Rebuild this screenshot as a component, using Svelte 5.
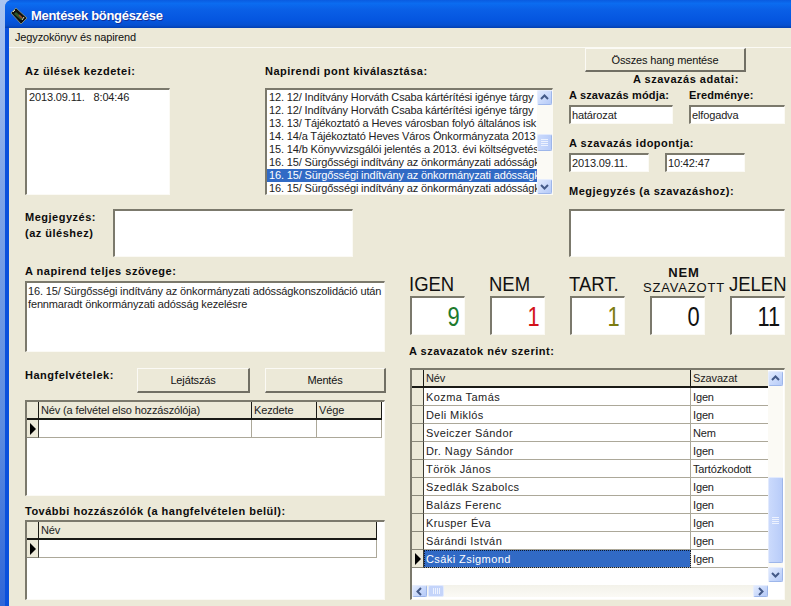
<script>
  const agenda = [
    "12. 12/ Indítvány Horváth Csaba kártérítési igénye tárgy",
    "12. 12/ Indítvány Horváth Csaba kártérítési igénye tárgy",
    "13. 13/ Tájékoztató a Heves városban folyó általános isk",
    "14. 14/a Tájékoztató Heves Város Önkormányzata 2013",
    "15. 14/b Könyvvizsgálói jelentés a 2013. évi költségvetés",
    "16. 15/ Sürgősségi indítvány az önkormányzati adósságk",
    "16. 15/ Sürgősségi indítvány az önkormányzati adósságk",
    "16. 15/ Sürgősségi indítvány az önkormányzati adósságk"
  ];

  const stats = [
    { label: "IGEN", value: 9, tone: "green" },
    { label: "NEM", value: 1, tone: "red" },
    { label: "TART.", value: 1, tone: "olive" },
    { label: "", value: 0, tone: "" },
    { label: "JELEN", value: 11, tone: "" }
  ];

  const votes = [
    ["Kozma Tamás", "Igen"],
    ["Deli Miklós", "Igen"],
    ["Sveiczer Sándor", "Nem"],
    ["Dr. Nagy Sándor", "Igen"],
    ["Török János", "Tartózkodott"],
    ["Szedlák Szabolcs", "Igen"],
    ["Balázs Ferenc", "Igen"],
    ["Krusper Éva", "Igen"],
    ["Sárándi István", "Igen"],
    ["Csáki Zsigmond", "Igen"]
  ];
</script>

{#snippet arrow(dir)}
  <div class="sb-btn">
    <svg width="9" height="9" viewBox="0 0 9 9">
      {#if dir === "up"}
        <path d="M1 6 L4.5 2.5 L8 6" />
      {:else if dir === "down"}
        <path d="M1 3 L4.5 6.5 L8 3" />
      {:else if dir === "left"}
        <path d="M6 1 L2.5 4.5 L6 8" />
      {:else}
        <path d="M3 1 L6.5 4.5 L3 8" />
      {/if}
    </svg>
  </div>
{/snippet}

{#snippet vscroll(offset, size)}
  <div class="sb-v">
    {@render arrow("up")}
    <div class="sb-track">
      <div class="sb-thumb" style="margin-top:{offset}px;height:{size}px"><i></i><i></i><i></i><i></i></div>
    </div>
    {@render arrow("down")}
  </div>
{/snippet}

{#snippet pointer()}
  <div class="row-head">
    <svg width="7" height="12" viewBox="0 0 7 12"><path d="M1 0 L7 6 L1 12 Z" /></svg>
  </div>
{/snippet}

<div class="screen">
  <div class="desk"></div>
  <div class="window">
    <header class="titlebar">
      <svg class="app-icon" width="18" height="18" viewBox="0 0 18 18">
        <path d="M6 1 L17 11 L11 17 L1 6 Z" fill="#11120e" stroke="#8fa08a" stroke-width="0.8" />
        <path d="M6 5 L13 11 L11 13 L4 7 Z" fill="#2f5a2c" />
        <path d="M9 8 L12 11" stroke="#a5482c" stroke-width="1.4" />
        <path d="M5 3 L3 5 M14 10 L12 13" stroke="#d8d3bd" stroke-width="1" />
      </svg>
      <span>Mentések böngészése</span>
    </header>
    <nav class="menubar">Jegyzokönyv és napirend</nav>

    <div class="content">
      <section class="top">
        <div class="top-left">
          <div class="list-row">
            <div class="col-sessions">
              <div class="label">Az ülések kezdetei:</div>
              <div class="sunken listbox sessions"><div class="item">2013.09.11.&nbsp;&nbsp;&nbsp;8:04:46</div></div>
            </div>
            <div class="col-agenda">
              <div class="label">Napirendi pont kiválasztása:</div>
              <div class="sunken listbox agenda">
                <div class="items">
                  {#each agenda as line, i}
                    <div class="item" class:selected={i === 6}>{line}</div>
                  {/each}
                </div>
                {@render vscroll(29, 17)}
              </div>
            </div>
          </div>
          <div class="note-row">
            <div class="label note-label">Megjegyzés:<br />(az üléshez)</div>
            <div class="sunken note"></div>
          </div>
        </div>

        <div class="top-right">
          <button class="btn save-all">Összes hang mentése</button>
          <div class="label vote-title">A szavazás adatai:</div>
          <div class="field-row">
            <div class="field-a">
              <div class="label tight">A szavazás módja:</div>
              <div class="sunken input">határozat</div>
            </div>
            <div class="field-b">
              <div class="label tight">Eredménye:</div>
              <div class="sunken input">elfogadva</div>
            </div>
          </div>
          <div class="label gap-label">A szavazás idopontja:</div>
          <div class="time-row">
            <div class="sunken input date">2013.09.11.</div>
            <div class="sunken input date">10:42:47</div>
          </div>
          <div class="label gap-label">Megjegyzés (a szavazáshoz):</div>
          <div class="sunken vote-note"></div>
        </div>
      </section>

      <section class="bottom">
        <div class="bottom-left">
          <div class="label">A napirend teljes szövege:</div>
          <div class="sunken full-text">16. 15/ Sürgősségi indítvány az önkormányzati adósságkonszolidáció után fennmaradt önkormányzati adósság kezelésre</div>

          <div class="rec-row">
            <div class="label rec-label">Hangfelvételek:</div>
            <button class="btn play">Lejátszás</button>
            <button class="btn save">Mentés</button>
          </div>

          <div class="sunken grid rec-grid">
            <div class="grid-row head">
              <div class="row-head"></div>
              <div class="cell c-name">Név (a felvétel elso hozzászólója)</div>
              <div class="cell c-time">Kezdete</div>
              <div class="cell c-time">Vége</div>
            </div>
            <div class="grid-row">
              {@render pointer()}
              <div class="cell c-name"></div>
              <div class="cell c-time"></div>
              <div class="cell c-time"></div>
            </div>
          </div>

          <div class="label others-label">További hozzászólók (a hangfelvételen belül):</div>
          <div class="sunken grid others-grid">
            <div class="grid-row head">
              <div class="row-head"></div>
              <div class="cell c-wide">Név</div>
            </div>
            <div class="grid-row">
              {@render pointer()}
              <div class="cell c-wide"></div>
            </div>
          </div>
        </div>

        <div class="bottom-right">
          <div class="stats">
            {#each stats as s}
              <div class="stat">
                {#if s.label}
                  <div class="stat-label">{s.label}</div>
                {:else}
                  <div class="stat-label small"><b>NEM</b><br />SZAVAZOTT</div>
                {/if}
                <div class="sunken stat-box {s.tone}"><span>{s.value}</span></div>
              </div>
            {/each}
          </div>

          <div class="label votes-label">A szavazatok név szerint:</div>
          <div class="sunken grid votes-grid">
            <div class="votes-main">
              <div class="grid-row head">
                <div class="row-head"></div>
                <div class="cell c-voter">Név</div>
                <div class="cell c-vote">Szavazat</div>
              </div>
              {#each votes as v, i}
                <div class="grid-row">
                  {#if i === votes.length - 1}
                    {@render pointer()}
                  {:else}
                    <div class="row-head"></div>
                  {/if}
                  <div class="cell c-voter voter" class:current={i === votes.length - 1}>{v[0]}</div>
                  <div class="cell c-vote">{v[1]}</div>
                </div>
              {/each}
              <div class="grid-fill"></div>
              <div class="sb-h">
                {@render arrow("left")}
                <div class="sb-thumb-h"><i></i><i></i><i></i><i></i></div>
                <div class="sb-h-track"></div>
                {@render arrow("right")}
              </div>
            </div>
            {@render vscroll(91, 86)}
          </div>
        </div>
      </section>
    </div>
  </div>
</div>

<style>
  :global(body) {
    margin: 0;
    background: #ece9d8;
  }

  .screen {
    display: flex;
    width: 791px;
    height: 606px;
    overflow: hidden;
    font-family: "Liberation Sans", Arial, sans-serif;
    font-size: 11px;
    letter-spacing: -0.14px;
    color: #111;
    background: #a9c4f0;
  }

  .screen * {
    box-sizing: border-box;
  }

  .desk {
    width: 5px;
    flex: none;
    background: linear-gradient(#a9c4f0 0, #7fa5e8 30%, #5d8de0 70%, #2f66d8 100%);
  }

  .window {
    flex: 1;
    min-width: 0;
    display: flex;
    flex-direction: column;
    background: #0a50dc;
    border-top-left-radius: 7px;
    overflow: hidden;
  }

  .titlebar {
    height: 28px;
    flex: none;
    display: flex;
    align-items: center;
    gap: 3px;
    padding: 3px 0 0 5px;
    color: #fff;
    font-size: 13px;
    font-weight: bold;
    letter-spacing: -0.3px;
    text-shadow: 1px 1px 0 #0f2f9a;
    background: linear-gradient(#0a5be0 0, #0b6cf0 12%, #0a5fe6 35%, #0556e0 70%, #0650d0 90%, #033fb0 100%);
  }

  .app-icon {
    flex: none;
  }

  .menubar {
    height: 20px;
    flex: none;
    margin-left: 4px;
    padding: 2px 0 0 6px;
    line-height: 14px;
    background: #ece9d8;
    border-bottom: 1px solid #fbfaf4;
  }

  .content {
    flex: 1;
    margin-left: 4px;
    background: #ece9d8;
    padding-left: 16px;
  }

  .label {
    font-weight: bold;
    line-height: 13px;
    letter-spacing: 0.5px;
    white-space: nowrap;
    color: #0c0c0c;
  }

  .tight {
    letter-spacing: 0.15px;
  }

  .sunken {
    background: #fff;
    border-style: solid;
    border-width: 2px 1px 1px 2px;
    border-color: #7b796c #fbfaf5 #fbfaf5 #7b796c;
  }

  .btn {
    display: block;
    padding: 0;
    font: inherit;
    letter-spacing: inherit;
    color: #111;
    background: #ece9d8;
    border-style: solid;
    border-width: 1px 2px 2px 1px;
    border-color: #fbfaf5 #716f64 #716f64 #fbfaf5;
  }

  /* top half */
  .top {
    display: flex;
    height: 209px;
  }

  .top-left {
    width: 528px;
    padding-top: 17px;
  }

  .list-row {
    display: flex;
    gap: 95px;
  }

  .col-sessions {
    width: 145px;
  }

  .col-agenda {
    width: 288px;
  }

  .listbox {
    margin-top: 10px;
    height: 107px;
    overflow: hidden;
  }

  .agenda {
    display: flex;
  }

  .items {
    flex: 1;
    min-width: 0;
    padding-top: 1px;
    overflow: hidden;
  }

  .item {
    height: 13px;
    line-height: 13px;
    padding-left: 2px;
    white-space: nowrap;
    color: #222;
  }

  .sessions .item {
    padding-top: 1px;
    height: 14px;
  }

  .item.selected {
    background: #316ac5;
    color: #fff;
  }

  .note-row {
    display: flex;
    margin-top: 14px;
  }

  .note-label {
    width: 88px;
    line-height: 16px;
  }

  .note {
    width: 240px;
    height: 48px;
  }

  .top-right {
    width: 216px;
    margin-left: 16px;
  }

  .save-all {
    width: 161px;
    height: 24px;
    margin-left: 16px;
  }

  .vote-title {
    margin: 1px 0 0 64px;
  }

  .field-row {
    display: flex;
    margin-top: 3px;
  }

  .field-a {
    width: 120px;
  }

  .field-a .input {
    width: 104px;
  }

  .field-b {
    width: 96px;
  }

  .input {
    height: 19px;
    margin-top: 3px;
    padding-left: 1px;
    line-height: 16px;
    color: #222;
  }

  .gap-label {
    margin-top: 13px;
  }

  .time-row {
    display: flex;
    gap: 16px;
  }

  .date {
    width: 80px;
  }

  .vote-note {
    height: 48px;
    margin-top: 11px;
  }

  /* bottom half */
  .bottom {
    display: flex;
  }

  .bottom-left {
    width: 361px;
    padding-top: 8px;
  }

  .full-text {
    width: 360px;
    height: 71px;
    margin-top: 3px;
    padding: 2px 0 0 1px;
    line-height: 13px;
    color: #222;
  }

  .rec-row {
    display: flex;
    margin-top: 16px;
  }

  .rec-label {
    width: 112px;
    margin-top: 1px;
  }

  .play {
    width: 113px;
    height: 25px;
  }

  .save {
    width: 121px;
    height: 25px;
    margin-left: 15px;
  }

  .grid {
    overflow: hidden;
  }

  .rec-grid {
    width: 360px;
    height: 96px;
    margin-top: 7px;
  }

  .others-label {
    margin-top: 9px;
  }

  .others-grid {
    width: 360px;
    height: 80px;
    margin-top: 2px;
  }

  .grid-row {
    display: flex;
    height: 18px;
  }

  .row-head {
    width: 12px;
    flex: none;
    display: flex;
    align-items: center;
    padding-left: 2px;
    background: #ece9d8;
    border-style: solid;
    border-width: 0 1px 1px 0;
    border-color: #3c3b34;
    border-bottom-color: #8a887a;
  }

  .row-head path {
    fill: #000;
  }

  .cell {
    flex: none;
    padding-left: 2px;
    line-height: 19px;
    white-space: nowrap;
    overflow: hidden;
    color: #222;
    border-right: 1px solid #aca899;
    border-bottom: 1px solid #aca899;
  }

  .voter {
    letter-spacing: 0.42px;
  }

  .head .row-head,
  .head .cell {
    background: #ece9d8;
    border-right-color: #1a1a16;
    border-bottom: 2px solid #1a1a16;
    line-height: 17px;
  }

  .c-name {
    width: 213px;
  }

  .c-time {
    width: 65px;
  }

  .c-wide {
    width: 338px;
  }

  .bottom-right {
    width: 375px;
    margin-left: 24px;
  }

  .stats {
    display: flex;
    gap: 25px;
    margin-top: 10px;
    height: 68px;
  }

  .stat {
    width: 55px;
    display: flex;
    flex-direction: column;
    justify-content: flex-end;
  }

  .stat-label {
    margin: 0 0 1px -1px;
    font-size: 21px;
    line-height: 22px;
    letter-spacing: 0;
    white-space: nowrap;
    color: #111;
    transform: scaleX(0.88);
    transform-origin: left;
  }

  .stat-label.small {
    width: 86px;
    margin-left: -9px;
    font-size: 13px;
    line-height: 15px;
    letter-spacing: 0.8px;
    text-align: center;
    transform: none;
  }

  .stat-box {
    height: 39px;
    padding-right: 4px;
    font-size: 28px;
    line-height: 37px;
    letter-spacing: 0;
    text-align: right;
    color: #111;
  }

  .stat-box span {
    display: inline-block;
    transform: scaleX(0.78);
    transform-origin: right;
  }

  .green {
    color: #1d7a2c;
  }

  .red {
    color: #d3121a;
  }

  .olive {
    color: #7c7c10;
  }

  .votes-label {
    margin: 10px 0 0 -1px;
  }

  .votes-grid {
    display: flex;
    height: 232px;
    margin-top: 10px;
    background: #fff;
  }

  .votes-main {
    width: 356px;
    display: flex;
    flex-direction: column;
  }

  .c-voter {
    width: 267px;
  }

  .c-vote {
    width: 77px;
    border-right: 0;
  }

  .head .c-vote {
    border-right: 0;
  }

  .c-voter.current {
    color: #fff;
    background: #316ac5;
    outline: 1px dotted #0c1a30;
    outline-offset: -1px;
  }

  .grid-fill {
    flex: 1;
  }

  /* scrollbars */
  .sb-v {
    width: 15px;
    flex: none;
    display: flex;
    flex-direction: column;
  }

  .votes-grid .sb-v {
    margin: 1px 0 17px;
  }

  .sb-btn {
    width: 15px;
    height: 15px;
    flex: none;
    display: flex;
    align-items: center;
    justify-content: center;
    background: linear-gradient(135deg, #e2ebfe, #b5caf8);
    border: 1px solid #e6edfd;
    border-right-color: #9db6ea;
    border-bottom-color: #9db6ea;
    border-radius: 2px;
  }

  .sb-btn path {
    fill: none;
    stroke: #445a88;
    stroke-width: 2;
  }

  .sb-track {
    flex: 1;
    background: #fbfaf5;
  }

  .sb-thumb {
    display: flex;
    flex-direction: column;
    align-items: center;
    justify-content: center;
    gap: 1px;
    background: linear-gradient(90deg, #cbdafc, #b8ccf9);
    border: 1px solid #e2eafd;
    border-right-color: #9db6ea;
    border-bottom-color: #9db6ea;
    border-radius: 2px;
  }

  .sb-thumb i {
    width: 7px;
    height: 1px;
    background: #edf2fe;
  }

  .sb-h {
    height: 12px;
    flex: none;
    display: flex;
    margin-bottom: 2px;
    background: linear-gradient(#f3f2ea, #fbfaf5);
  }

  .sb-h .sb-btn {
    height: 12px;
  }

  .sb-thumb-h {
    width: 16px;
    margin-left: 1px;
    display: flex;
    align-items: center;
    justify-content: center;
    gap: 1px;
    background: #c4d4fa;
    border: 1px solid #e2eafd;
    border-radius: 2px;
  }

  .sb-thumb-h i {
    width: 1px;
    height: 6px;
    background: #edf2fe;
  }

  .sb-h-track {
    flex: 1;
  }
</style>
